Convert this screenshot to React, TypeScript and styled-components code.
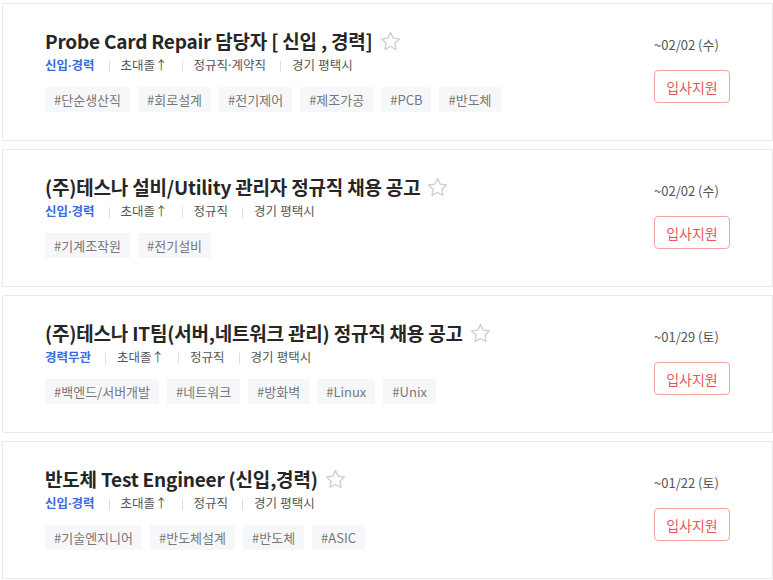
import React from 'react';
import styled, { createGlobalStyle } from 'styled-components';

type Job = {
    title: string;
    career: string;
    edu: string;
    type: string;
    place: string;
    tags: string[];
    due: string;
};

const jobs: Job[] = [
    {
        title: 'Probe Card Repair 담당자 [ 신입 , 경력]',
        career: '신입·경력',
        edu: '초대졸↑',
        type: '정규직·계약직',
        place: '경기 평택시',
        tags: ['#단순생산직', '#회로설계', '#전기제어', '#제조가공', '#PCB', '#반도체'],
        due: '~02/02 (수)',
    },
    {
        title: '(주)테스나 설비/Utility 관리자 정규직 채용 공고',
        career: '신입·경력',
        edu: '초대졸↑',
        type: '정규직',
        place: '경기 평택시',
        tags: ['#기계조작원', '#전기설비'],
        due: '~02/02 (수)',
    },
    {
        title: '(주)테스나 IT팀(서버,네트워크 관리) 정규직 채용 공고',
        career: '경력무관',
        edu: '초대졸↑',
        type: '정규직',
        place: '경기 평택시',
        tags: ['#백엔드/서버개발', '#네트워크', '#방화벽', '#Linux', '#Unix'],
        due: '~01/29 (토)',
    },
    {
        title: '반도체 Test Engineer (신입,경력)',
        career: '신입·경력',
        edu: '초대졸↑',
        type: '정규직',
        place: '경기 평택시',
        tags: ['#기술엔지니어', '#반도체설계', '#반도체', '#ASIC'],
        due: '~01/22 (토)',
    },
];

const StarIcon = () => (
    <svg width="23" height="23" viewBox="0 0 24 24" fill="none" stroke="#cfcfcf" strokeWidth="1.4" strokeLinejoin="round">
        <path d="M12 2.6l2.85 5.9 6.45.9-4.7 4.5 1.15 6.4L12 17.2l-5.75 3.1 1.15-6.4-4.7-4.5 6.45-.9z" />
    </svg>
);

export default function App() {
    return <>
        <GlobalStyle />
        <List>
            {jobs.map((job, i) => (
                <Card key={i}>
                    <Main>
                        <TitleRow>
                            <Title>{job.title}</Title>
                            <StarButton><StarIcon /></StarButton>
                        </TitleRow>
                        <Meta>
                            <Career>{job.career}</Career>
                            <Sep />
                            <span>{job.edu}</span>
                            <Sep />
                            <span>{job.type}</span>
                            <Sep />
                            <span>{job.place}</span>
                        </Meta>
                        <Tags>
                            {job.tags.map(t => <Tag key={t}>{t}</Tag>)}
                        </Tags>
                    </Main>
                    <Side>
                        <Due>{job.due}</Due>
                        <ApplyButton>입사지원</ApplyButton>
                    </Side>
                </Card>
            ))}
        </List>
    </>
}

const GlobalStyle = createGlobalStyle`
    body {
        margin: 0;
        background: #fff;
        font-family: "Noto Sans CJK KR", "Noto Sans", sans-serif;
    }
`

const List = styled.div`
    display: flex;
    flex-direction: column;
    gap: 8px;
    padding: 3px 0 0 2px;
`

const Card = styled.div`
    display: flex;
    flex-direction: row;
    justify-content: space-between;
    height: 138px;
    box-sizing: border-box;
    border: 1px solid #e9e9e9;
    padding: 24px 42px 0 42px;
    background: #fff;
`

const Main = styled.div`
    display: flex;
    flex-direction: column;
`

const TitleRow = styled.div`
    display: flex;
    flex-direction: row;
    align-items: center;
    gap: 6px;
`

const Title = styled.div`
    font-size: 19px;
    font-weight: 700;
    line-height: 26px;
    color: #262626;
    letter-spacing: -0.2px;
`

const StarButton = styled.span`
    display: flex;
    width: 23px;
    height: 23px;
`

const Meta = styled.div`
    display: flex;
    flex-direction: row;
    align-items: center;
    margin-top: 2px;
    font-family: "Noto Sans", "Noto Sans CJK KR", sans-serif;
    font-size: 12.5px;
    line-height: 20px;
    color: #555;
`

const Career = styled.span`
    color: #3b6be0;
    font-weight: 700;
`

const Sep = styled.span`
    width: 1px;
    height: 11px;
    background: #dedede;
    margin: 0 11px 0 14px;
`

const Tags = styled.div`
    display: flex;
    flex-direction: row;
    gap: 8px;
    margin-top: 11px;
`

const Tag = styled.span`
    height: 25px;
    line-height: 25px;
    padding: 0 9px;
    background: #f6f7fa;
    color: #777;
    font-size: 13px;
`

const Side = styled.div`
    display: flex;
    flex-direction: column;
    align-items: flex-start;
    width: 76px;
    padding-top: 7px;
`

const Due = styled.div`
    font-size: 13px;
    line-height: 20px;
    color: #555;
    white-space: nowrap;
`

const ApplyButton = styled.button`
    margin-top: 15px;
    width: 76px;
    height: 33px;
    box-sizing: border-box;
    border: 1px solid #f6a3a3;
    border-radius: 4px;
    background: #fff;
    color: #e4575c;
    font-family: inherit;
    font-size: 14px;
    cursor: pointer;
`
